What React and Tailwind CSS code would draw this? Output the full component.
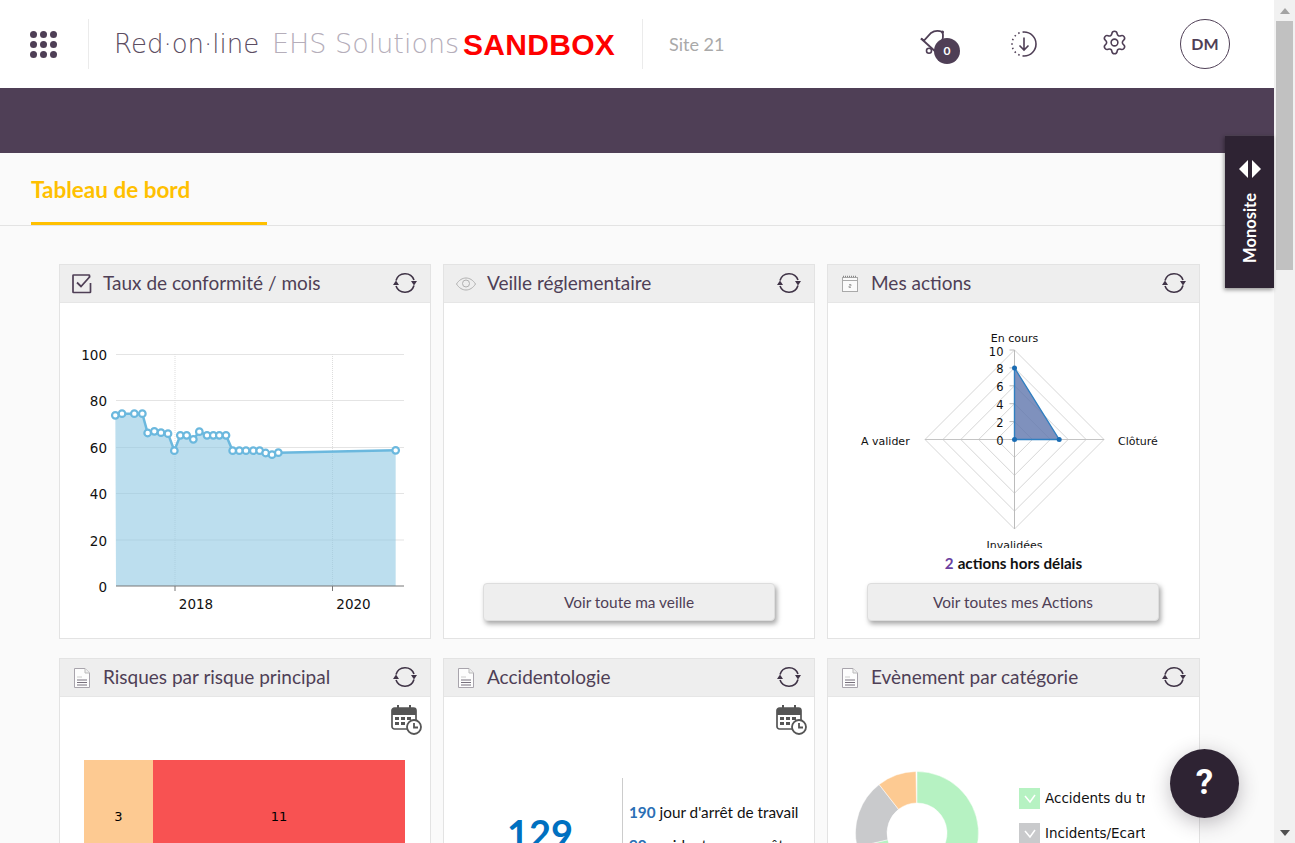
import React from 'react';
import { Settings } from 'lucide-react';

const uiFont = "font-['Lato','Noto_Sans',sans-serif]";
const chartFont = "DejaVu Sans, sans-serif";

const RefreshIcon = () => (
    <svg width="24" height="24" viewBox="0 0 24 24" fill="none" className="shrink-0">
        <path d="M3 9.500A9.500 9.500 0 0 1 21 9" stroke="#3f3346" strokeWidth="1.600" />
        <path d="M21 14.500A9.500 9.500 0 0 1 3 15" stroke="#3f3346" strokeWidth="1.600" />
        <polygon points="18,10 24,10 21,14.500" fill="#3f3346" />
        <polygon points="0,14 6,14 3,9.500" fill="#3f3346" />
    </svg>
);

const CheckIcon = () => (
    <svg width="20" height="20" viewBox="0 0 20 20" fill="none">
        <path d="M17.500 3V1.500c0-.3-.2-.5-.5-.5H1.500c-.3 0-.5.2-.5.5V18c0 .3.2.5.5.5H18c.3 0 .5-.2.5-.5V9" stroke="#4f3f56" strokeWidth="1.700" />
        <path d="M5 8.500l4 4 9-10" stroke="#4f3f56" strokeWidth="1.800" />
    </svg>
);

const EyeIcon = () => (
    <svg width="20" height="14" viewBox="0 0 20 14" fill="none">
        <path d="M.5 7C3 3 6.500 1 10 1s7 2 9.500 6c-2.500 4-6 6-9.500 6S3 11 .5 7z" stroke="#b0b0b0" />
        <circle cx="10" cy="6.500" r="3.500" stroke="#b0b0b0" />
    </svg>
);

const SmallCalendarIcon = () => (
    <svg width="16" height="17" viewBox="0 0 16 17" fill="none">
        <rect x=".5" y="2.500" width="15" height="14" fill="#fafafa" stroke="#a9a9a9" />
        <path d="M.5 5.500h15" stroke="#a9a9a9" />
        <path d="M1 1.500h14" stroke="#888" strokeDasharray="1 1" strokeWidth="1.500" />
        <path d="M7 9.500h2v1.500H7v1.500h2" stroke="#888" strokeWidth=".7" />
    </svg>
);

const DocIcon = () => (
    <svg width="16" height="20" viewBox="0 0 16 20" fill="none">
        <path d="M.5.500h10.500l4.500 4.500v14.500H.5z" fill="#fdfdfd" stroke="#a8a4ac" />
        <path d="M11 .5v4.500h4.500" fill="#eee" stroke="#bbb" />
        <path d="M3 9h5" stroke="#ccc" />
        <path d="M3 12h10M3 14.500h10M3 17h10" stroke="#77707c" />
    </svg>
);

const CalendarClockIcon = () => (
    <svg width="31" height="31" viewBox="0 0 31 31" fill="none">
        <path d="M1 7a3 3 0 0 1 3-3h18a3 3 0 0 1 3 3v4H1z" fill="#555" />
        <rect x="1" y="4" width="24" height="21" rx="2.500" stroke="#555" strokeWidth="1.700" />
        <rect x="6" y="1" width="2" height="6" fill="#555" />
        <rect x="18" y="1" width="2" height="6" fill="#555" />
        <path d="M4 13h4v3H4zM10 13h4v3h-4zM16 13h4v3h-4zM4 18h4v3H4zM10 18h4v3h-4z" fill="#555" />
        <circle cx="23" cy="23" r="7" fill="#fff" stroke="#555" strokeWidth="1.800" />
        <path d="M23 19v4.500h4" stroke="#555" strokeWidth="1.800" />
    </svg>
);

const Card = ({ icon, title, children }) => (
    <div className="h-[375px] border border-[#e3e3e3] bg-white flex flex-col">
        <div className="h-[38px] shrink-0 bg-[#eeeeee] border-b border-[#e6e6e6] flex items-center">
            <div className="w-[43px] shrink-0 flex justify-center">{icon}</div>
            <div className="flex-1 text-[19px] text-[#4f3f56]">{title}</div>
            <div className="mr-[13px] -mt-[2px]"><RefreshIcon /></div>
        </div>
        <div className="flex-1 min-h-0 flex flex-col">{children}</div>
    </div>
);

const WideButton = ({ label }) => (
    <button className="w-[292px] h-[38px] mx-auto shrink-0 pt-[2px] bg-[#eeeeee] border border-[#dddddd] rounded-sm shadow-[2px_3px_5px_rgba(0,0,0,0.35)] text-[15.400px] text-[#4f3f56]">
        {label}
    </button>
);

const ComplianceChart = () => {
    // points read off the chart, in card body coordinates
    const pts = [[196, 466], [216, 461], [253, 461], [277, 461], [293, 519], [313, 514], [333, 518], [354, 521], [373, 572], [391, 526], [410, 526], [430, 538], [448, 515], [471, 526], [490, 526], [508, 526], [528, 526], [548, 572], [568, 572], [588, 572], [610, 572], [629, 572], [647, 579], [666, 584], [685, 578], [1037, 571]]
        .map(([x, y]) => [x / 3 - 10, y / 3 - 43]);
    const line = pts.map(([x, y]) => `${x},${y}`).join(' ');
    const ticks = [[100, 51.5], [80, 97.5], [60, 144.5], [40, 190.5], [20, 237], [0, 283]];
    return (
        <svg width="370" height="335" viewBox="0 0 370 335" fontFamily={chartFont} fontSize="13.500" fill="#111">
            {ticks.map(([v, y]) => (
                <g key={v}>
                    {v > 0 && <line x1="56" x2="344" y1={y} y2={y} stroke="#e4e4e4" strokeWidth="1.200" />}
                    <text x="47" y={y + 5.5} textAnchor="end">{v}</text>
                </g>
            ))}
            <line x1="115" x2="115" y1="51" y2="283" stroke="#ddd" strokeDasharray="1 1" />
            <line x1="272.500" x2="272.500" y1="51" y2="283" stroke="#ddd" strokeDasharray="1 1" />
            <polygon points={`56,283 ${line} ${pts[pts.length - 1][0]},283`} fill="#8fc8e3" fillOpacity="0.6" />
            <line x1="56" x2="344" y1="283" y2="283" stroke="#777" />
            <line x1="115" x2="115" y1="283" y2="288" stroke="#777" />
            <line x1="272.500" x2="272.500" y1="283" y2="288" stroke="#777" />
            <polyline points={line} fill="none" stroke="#6bb8de" strokeWidth="2.500" />
            {pts.map(([x, y], i) => (
                <circle key={i} cx={x} cy={y} r="3.300" fill="#fff" stroke="#6bb8de" strokeWidth="2.200" />
            ))}
            <text x="136" y="306" textAnchor="middle">2018</text>
            <text x="293.500" y="306" textAnchor="middle">2020</text>
        </svg>
    );
};

const RadarChart = () => {
    const cx = 186.5;
    const cy = 136.5;
    const step = 17.9;
    return (
        <svg width="370" height="245" viewBox="0 0 370 245" fontFamily={chartFont} fontSize="11" fill="#111" className="shrink-0">
            {[1, 2, 3, 4, 5].map((k) => {
                const r = k * step;
                return <polygon key={k} points={`${cx},${cy - r} ${cx + r},${cy} ${cx},${cy + r} ${cx - r},${cy}`} fill="none" stroke="#d6d6d6" />;
            })}
            <line x1={cx} x2={cx} y1={cy - 89.5} y2={cy + 89.5} stroke="#bbb" />
            <line x1={cx - 89.5} x2={cx + 89.5} y1={cy} y2={cy} stroke="#c4c4c4" />
            {[0, 2, 4, 6, 8, 10].map((v, i) => (
                <g key={v}>
                    <line x1={cx - 5} x2={cx} y1={cy - i * step} y2={cy - i * step} stroke="#bbb" />
                    <text x={cx - 11} y={cy - i * step + 5.5} textAnchor="end" fontSize="11.500">{v}</text>
                </g>
            ))}
            <polygon points={`${cx},${cy - 71.6} ${cx + 44.7},${cy} ${cx},${cy}`} fill="#5f76ac" fillOpacity="0.8" stroke="#2f7fc1" strokeWidth="1.400" />
            <circle cx={cx} cy={cy - 71.6} r="2.500" fill="#1a6cb3" />
            <circle cx={cx + 44.7} cy={cy} r="2.500" fill="#1a6cb3" />
            <circle cx={cx} cy={cy} r="2.500" fill="#1a6cb3" />
            <text x={cx} y="39" textAnchor="middle">En cours</text>
            <text x="33" y="141.500">A valider</text>
            <text x="290" y="141.500">Clôturé</text>
            <text x={cx} y="246" textAnchor="middle">Invalidées</text>
        </svg>
    );
};

const arc = (cx, cy, ro, ri, a0, a1) => {
    const p = (r, a) => {
        const t = ((a - 90) * Math.PI) / 180;
        return `${cx + r * Math.cos(t)} ${cy + r * Math.sin(t)}`;
    };
    const big = a1 - a0 > 180 ? 1 : 0;
    return `M${p(ro, a0)}A${ro} ${ro} 0 ${big} 1 ${p(ro, a1)}L${p(ri, a1)}A${ri} ${ri} 0 ${big} 0 ${p(ri, a0)}Z`;
};

const LegendItem = ({ color, label }) => (
    <div className="flex items-center h-[21px] w-[126px] overflow-hidden whitespace-nowrap">
        <div className={`w-[21px] h-[21px] shrink-0 flex items-center justify-center ${color}`}>
            <svg width="12" height="10" viewBox="0 0 12 10" fill="none">
                <path d="M1 2l5 6 5-7" stroke="#fff" strokeWidth="1.500" />
            </svg>
        </div>
        <span className="ml-[5px] text-[13.500px] text-[#111] font-['DejaVu_Sans',sans-serif]">{label}</span>
    </div>
);

export default function App() {
    return (
        <div className={`h-[843px] overflow-hidden flex relative bg-[#fafafa] ${uiFont}`}>
            <div className="flex-1 min-w-0 flex flex-col">
                {/* Top bar */}
                <header className="h-[88px] shrink-0 bg-white flex items-center">
                    <div className="w-[88px] shrink-0 flex justify-center pr-[1px]">
                        <div className="grid grid-cols-3 gap-x-[3px] gap-y-[3px]">
                            {Array.from({ length: 9 }).map((_, i) => (
                                <span key={i} className="w-[7px] h-[7px] rounded-full bg-[#4f3f56]" />
                            ))}
                        </div>
                    </div>
                    <div className="w-px h-[50px] bg-[#ebebeb]" />
                    <div className="w-[553px] shrink-0 pl-[25px] flex items-center whitespace-nowrap font-['DejaVu_Sans',sans-serif]">
                        <span className="w-[158px] pt-[1px] text-[26px] font-extralight text-[#5c4d62]">Red·on·line</span>
                        <span className="w-[191px] pt-[1px] text-[27px] font-extralight text-[#b5aeba]">EHS Solutions</span>
                        <span className="text-[30px] font-bold tracking-[0.3px] text-[#fe0000] font-['Liberation_Sans',sans-serif]">SANDBOX</span>
                    </div>
                    <div className="w-px h-[50px] bg-[#ebebeb]" />
                    <div className="ml-[26px] text-[18px] text-[#a9a9a9]">Site 21</div>
                    <div className="ml-auto flex items-center">
                        <div className="relative w-[42px] h-[40px] mr-[51px]">
                            <svg width="32" height="32" viewBox="0 0 32 32" fill="none" className="absolute left-0 top-[4px]">
                                <path d="M3 10.500L6 12.500L13 5Q18 1.500 24.500 4Q26 10 23 15L17 22L19 25" stroke="#4f3f56" strokeWidth="1.800" />
                                <path d="M3 10.500L19 25" stroke="#4f3f56" strokeWidth="1.800" />
                                <circle cx="11" cy="22.700" r="2.500" fill="#fff" stroke="#4f3f56" strokeWidth="1.600" />
                                <circle cx="24.500" cy="4" r="1.500" fill="#4f3f56" />
                            </svg>
                            <span className="absolute left-[16px] top-[14px] w-[26px] h-[26px] rounded-full bg-[#4f3f56] text-white text-[12px] font-bold flex items-center justify-center">0</span>
                        </div>
                        <svg width="26" height="26" viewBox="0 0 26 26" fill="none" className="mr-[64px] -mt-[1px]">
                            <path d="M13 1A12 12 0 0 1 13 25" stroke="#4f3f56" strokeWidth="1.600" />
                            <path d="M13 25A12 12 0 0 1 13 1" stroke="#4f3f56" strokeWidth="1.600" strokeDasharray="1.500 3" />
                            <path d="M13 6.500V19M8.500 14.500L13 19L17.500 14.500" stroke="#4f3f56" strokeWidth="1.600" />
                        </svg>
                        <Settings size={27} strokeWidth={1.4} color="#4f3f56" className="mr-[52px] -mt-[4px]" />
                        <div className="w-[50px] h-[50px] mr-[44px] rounded-full border border-[#4f3f56] flex items-center justify-center text-[16px] font-bold text-[#4f3f56]">DM</div>
                    </div>
                </header>
                <div className="h-[65px] shrink-0 bg-[#4f3f56]" />

                {/* Tab */}
                <div className="shrink-0 border-b border-[#e3e3e3]">
                    <div className="ml-[31px] w-[236px] h-[72px] pt-[23px] border-b-[3px] border-[#ffc000] text-[22.500px] leading-[28px] font-bold text-[#ffc000]">
                        Tableau de bord
                    </div>
                </div>

                {/* Dashboard cards */}
                <div className="pt-[38px] pl-[59px] grid grid-cols-[372px_372px_373px] gap-x-3 gap-y-[19px]">
                    <Card icon={<CheckIcon />} title="Taux de conformité / mois">
                        <ComplianceChart />
                    </Card>
                    <Card icon={<EyeIcon />} title="Veille réglementaire">
                        <div className="mt-auto pb-[17px] flex"><WideButton label="Voir toute ma veille" /></div>
                    </Card>
                    <Card icon={<SmallCalendarIcon />} title="Mes actions">
                        <RadarChart />
                        <div className="h-[30px] shrink-0 flex items-center justify-center text-[15.200px] font-bold text-[#111]">
                            <span className="text-[#6b3fa0] mr-[4px]">2</span> actions hors délais
                        </div>
                        <div className="mt-[5px] pr-[1px] flex"><WideButton label="Voir toutes mes Actions" /></div>
                    </Card>

                    <Card icon={<DocIcon />} title="Risques par risque principal">
                        <div className="flex justify-end pt-[7px] pr-[8px]"><CalendarClockIcon /></div>
                        <div className="mt-[25px] ml-[24px] flex h-[114px] text-[13px] text-black font-['DejaVu_Sans',sans-serif]">
                            <div className="w-[69px] bg-[#fdca92] flex items-center justify-center">3</div>
                            <div className="w-[252px] bg-[#f85252] flex items-center justify-center">11</div>
                        </div>
                    </Card>
                    <Card icon={<DocIcon />} title="Accidentologie">
                        <div className="flex justify-end pt-[7px] pr-[7px]"><CalendarClockIcon /></div>
                        <div className="mt-[43px] flex">
                            <div className="w-[178px] pl-[14px] pt-[32px] text-center text-[38px] leading-[46px] font-bold text-[#0070c0]">129</div>
                            <div className="flex-1 border-l border-[#cccccc] pl-[6px] pt-[23px] text-[15.300px] text-[#111]">
                                <div className="h-[26px]"><b className="text-[#2a6fb5]">190</b> jour d'arrêt de travail</div>
                                <div className="h-[26px] mt-[7px]"><b className="text-[#2a6fb5]">90</b> accidents avec arrêt</div>
                            </div>
                        </div>
                    </Card>
                    <Card icon={<DocIcon />} title="Evènement par catégorie">
                        <div className="mt-[74px] ml-[27px] flex">
                            <svg width="124" height="124" viewBox="0 0 124 124" className="shrink-0">
                                <path d={arc(62, 62, 61.5, 30, 0, 257)} fill="#b6f2c2" stroke="#fff" strokeWidth=".5" />
                                <path d={arc(62, 62, 61.5, 30, 257, 322)} fill="#c9cacc" stroke="#fff" strokeWidth=".5" />
                                <path d={arc(62, 62, 61.5, 30, 322, 359)} fill="#fdca92" stroke="#fff" strokeWidth=".5" />
                            </svg>
                            <div className="ml-[40px] pt-[17px] flex flex-col gap-[14px]">
                                <LegendItem color="bg-[#b6f2c2]" label="Accidents du travail" />
                                <LegendItem color="bg-[#c9cacc]" label="Incidents/Ecarts" />
                            </div>
                        </div>
                    </Card>
                </div>
            </div>

            {/* Browser scrollbar */}
            <div className="w-[21px] shrink-0 bg-[#f1f1f1] flex flex-col items-center">
                <div className="h-[21px] flex items-center justify-center">
                    <svg width="10" height="6" viewBox="0 0 10 6"><polygon points="5,0 10,6 0,6" fill="#a3a3a3" /></svg>
                </div>
                <div className="w-[17px] h-[249px] bg-[#c1c1c1]" />
                <div className="mt-auto h-[21px] flex items-center justify-center">
                    <svg width="10" height="6" viewBox="0 0 10 6"><polygon points="0,0 10,0 5,6" fill="#505050" /></svg>
                </div>
            </div>

            {/* Monosite side tab */}
            <div className="absolute left-[1225px] top-[135px] w-[49px] h-[153px] bg-[#2e2333] border-t border-[#4a3f4f] shadow-[-1px_2px_4px_rgba(0,0,0,0.4)] flex flex-col items-center pt-[24px]">
                <svg width="22" height="18" viewBox="0 0 22 18"><polygon points="0,9 9,0 9,18" fill="#fff" /><polygon points="22,9 13,0 13,18" fill="#fff" /></svg>
                <div className="mt-[15px] text-white text-[16.500px] leading-[20px] font-bold [writing-mode:vertical-rl] rotate-180">Monosite</div>
            </div>

            {/* Help button */}
            <div className="absolute left-[1170px] top-[749px] w-[69px] h-[69px] rounded-full bg-[#2e2333] shadow-[0_5px_20px_rgba(46,35,51,0.3)] flex items-center justify-center text-white text-[35px] font-bold font-['Roboto',sans-serif]">?</div>
        </div>
    );
}
